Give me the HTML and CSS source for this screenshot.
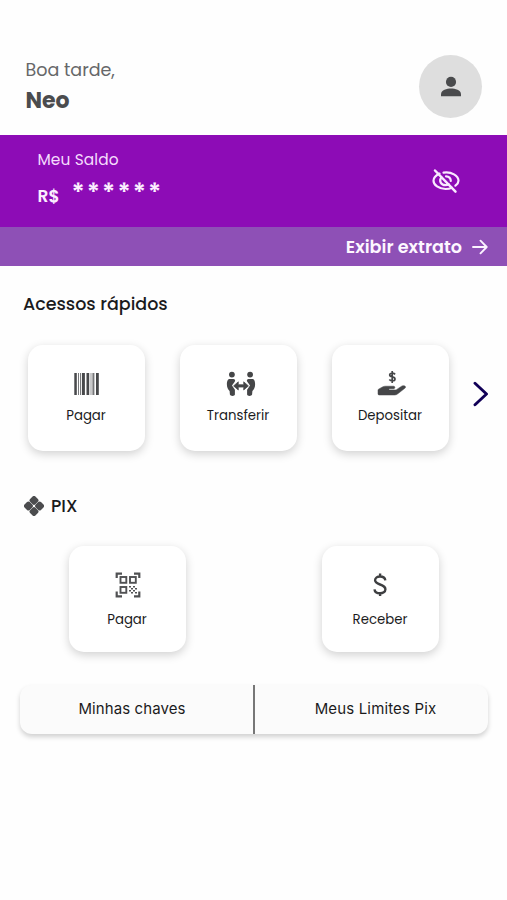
FILE: index.html
```html
<!DOCTYPE html>
<html lang="pt-BR">
<head>
<meta charset="utf-8">
<title>Conta</title>
<link rel="stylesheet" href="styles.css">
</head>
<body>
<header class="header">
  <div class="greeting"><span class="hello">Boa tarde,</span><strong class="name">Neo</strong></div>
  <div class="avatar">
    <svg width="32" height="32" viewBox="0 0 24 24" fill="#4a4b4d"><circle cx="12" cy="8.2" r="3.8"/><path d="M4.500 19v-1.500c0-3.200 4.500-4.300 7.500-4.300s7.500 1.100 7.500 4.300v1.500z"/></svg>
  </div>
</header>
<section class="balance">
  <div class="amount">
    <span class="label">Meu Saldo</span>
    <div class="value"><span class="currency">R$</span><span class="stars">******</span></div>
  </div>
  <svg class="eye" width="28" height="26" viewBox="0 0 28 26" fill="none" stroke="#f9eaff" stroke-width="2.200" stroke-linecap="round"><path d="M7.500 5.600C4 7.400 1.500 10.200 1.500 12.700C1.500 17 7 21 13.500 21C15.800 21 18 20.600 19.800 19.700M11.500 4.600C19.500 3.200 26.500 8 26.500 12.700C26.500 14.500 25.300 16.200 23.400 17.700M9.500 9.300C6.500 13 9 17.200 13.500 17.200C14.800 17.200 15.800 16.900 16.700 16.200M14 8.300C16.900 8.200 18.900 10.300 18.800 13"/><path d="M3 2.500L23.500 23.700" stroke-width="2.500"/></svg>
</section>
<div class="statement">
  <span class="statement-text">Exibir extrato</span>
  <svg width="16" height="16" viewBox="0 0 16 16" fill="none" stroke="#fbf3ff" stroke-width="1.900" stroke-linecap="round" stroke-linejoin="round"><path d="M1 8H14.500M8.500 1.700L14.700 8L8.500 14.300"/></svg>
</div>
<h2 class="title">Acessos rápidos</h2>
<div class="quick">
  <div class="card">
    <svg class="icon" width="28" height="28" viewBox="0 0 28 28" fill="#48494b"><path d="M1.300 3h2.500v22H1.300zM8.900 3h3v22h-3zM13.500 3h2.700v22h-2.700zM23 3h2.800v22H23z"/><path fill="#77787a" d="M5 3h1v22H5zM7 3h1v22H7zM17.600 3h.8v22h-.8zM19.400 3h2v22h-2z"/></svg>
    <span class="card-text">Pagar</span>
  </div>
  <div class="card">
    <svg class="icon transfer-icon" width="30" height="28" viewBox="0 0 30 28" fill="#454648"><circle cx="5.900" cy="4.600" r="2.900"/><circle cx="24.100" cy="4.600" r="2.900"/><path d="M3.700 9H7.300C9 9 9.700 10.500 8.700 11.700L6 15.600L8.900 19.800V24.500C8.900 26.400 4.200 26.400 3.900 24.500L3.600 21C2 19.500.9 17.200.9 14.500C.9 11.500 1.500 9 3.700 9zM26.300 9H22.700C21 9 20.300 10.500 21.300 11.700L24 15.600L21.100 19.800V24.500C21.100 26.400 25.800 26.400 26.100 24.500L26.400 21C28 19.500 29.100 17.200 29.100 14.500C29.100 11.500 28.500 9 26.300 9z"/><path d="M7.600 15.900L12.300 11.800V14.700H17.700V11.800L22.400 15.900L17.700 20V17.100H12.300V20z" stroke="#454648" stroke-width=".7" stroke-linejoin="round"/></svg>
    <span class="card-text">Transferir</span>
  </div>
  <div class="card">
    <svg class="icon deposit-icon" width="30" height="28" viewBox="0 0 30 28"><path d="M18.100 4.400C16.500 2.700 12.700 2.800 12.700 5C12.700 7.600 18 6.200 18 8.900C18 11.200 14 11.300 12.300 9.500M15.200 1V13" fill="none" stroke="#454648" stroke-width="1.700"/><path d="M2 18.900L5.500 16.900C6.300 16.400 7.500 16.200 8.500 16.200H16.500C18.300 16.200 18.300 18.700 16.500 18.700H12.500C11.700 18.700 11.700 19.900 12.500 19.900H19.100L24.600 16.200C27.500 14.800 29.800 16.700 27.800 18.300L20.800 23.800C19.900 24.600 18.700 25 17.500 25H2.300C1.500 25 1 24.600 1 23.900V20.100C1 19.500 1.400 19.200 2 18.900z" fill="#454648" stroke="#454648" stroke-width=".5"/></svg>
    <span class="card-text">Depositar</span>
  </div>
  <svg class="next" width="16" height="26" viewBox="0 0 16 26" fill="none" stroke="#110057" stroke-width="2.900" stroke-linecap="round" stroke-linejoin="round"><path d="M2 2.300L13.500 13L2 23.700"/></svg>
</div>
<div class="pix-title">
  <svg width="20" height="20" viewBox="0 0 20 20"><g transform="rotate(45 10 10)" fill="#4b4c4e"><rect x="2.300" y="2.300" width="7.500" height="7.500" rx="2"/><rect x="10.200" y="2.300" width="7.500" height="7.500" rx="2"/><rect x="2.300" y="10.200" width="7.500" height="7.500" rx="2"/><rect x="10.200" y="10.200" width="7.500" height="7.500" rx="2"/></g></svg>
  <h2 class="pix-name">PIX</h2>
</div>
<div class="pix">
  <div class="card">
    <svg class="icon" width="28" height="28" viewBox="0 0 28 28" fill="none" stroke="#505153" stroke-width="1.900"><path d="M2.700 7V2.700H8M20 2.700H25.300V7M2.700 20.500V25.300H8M20 25.300H25.300V20.500" stroke-width="2.200"/><rect x="6.500" y="6" width="5.800" height="5.800"/><rect x="16" y="6" width="5.800" height="5.800"/><rect x="6.500" y="16" width="5.800" height="5.800"/><path d="M15 15.800h2m2 0h2M17 17.800h2m2 0h2M15 19.800h2m2 0h2M17 21.800h2m2 0h2" stroke-width="1.500"/></svg>
    <span class="card-text">Pagar</span>
  </div>
  <div class="card">
    <svg class="icon dollar" width="28" height="28" viewBox="0 0 28 28" fill="none" stroke="#3e3f41" stroke-width="2.400"><path d="M19.300 9.300C18.800 4.200 9.100 4.100 9.100 9.300C9.100 14.500 19.400 12.500 19.400 18.300C19.400 23.700 9 23.500 8.500 18.300M14.100 2.500V6M14.100 21.500V25"/></svg>
    <span class="card-text">Receber</span>
  </div>
</div>
<div class="bar">
  <div class="option keys">Minhas chaves</div>
  <div class="option limits">Meus Limites Pix</div>
</div>
</body>
</html>
```

FILE: styles.css
```css
* { box-sizing: border-box; }
body { margin: 0; height: 900px; background: #fefefe; font-family: Poppins, Inter, sans-serif; color: #1b1b1d; overflow: hidden; }
svg { display: block; flex: none; }
h2 { margin: 0; font-weight: 500; }
.header { height: 135px; padding: 55px 25px 0 25.5px; display: flex; justify-content: space-between; }
.greeting { display: flex; flex-direction: column; white-space: nowrap; }
.hello { font-size: 17.5px; line-height: 31px; color: #666769; }
.name { font-size: 22px; line-height: 30px; color: #4b4c4e; }
.avatar { width: 63px; height: 63px; border-radius: 50%; background: #dedede; display: flex; align-items: center; justify-content: center; }
.balance { height: 92px; background: #8d0cb6; color: #fbefff; display: flex; justify-content: space-between; padding: 14px 47px 0 37.5px; }
.amount { display: flex; flex-direction: column; white-space: nowrap; }
.label { font-size: 15.4px; line-height: 21px; letter-spacing: .1px; color: #f5dcfd; }
.value { display: flex; height: 40px; }
.currency { width: 34px; padding-top: 16px; font-size: 17px; line-height: 20px; font-weight: 600; }
.stars { font-size: 25.5px; line-height: 45px; font-weight: 600; letter-spacing: 2.1px; }
.eye { margin-top: 19px; }
.statement { height: 39px; background: #8e50b6; color: #fdf7ff; display: flex; align-items: center; justify-content: flex-end; gap: 10px; padding-right: 19px; }
.statement-text { font-size: 17.6px; line-height: 26px; font-weight: 600; white-space: nowrap; }
.title { margin: 25px 0 0 23px; font-size: 17.500px; line-height: 26px; }
.quick { margin: 28px 0 0 28px; display: flex; gap: 35px; }
.card { width: 117px; height: 106px; border-radius: 15px; background: #fff; box-shadow: 0 3px 10px rgba(0,0,0,.18); display: flex; flex-direction: column; align-items: center; padding-top: 25px; white-space: nowrap; }
.icon { display: block; }
.transfer-icon { margin-left: 5px; }
.deposit-icon { margin-left: 2px; }
.dollar { margin-right: 1px; }
.card-text { margin: 8px 1px 0 0; font-size: 13.3px; line-height: 20px; }
.next { margin: 36px 0 0 -11px; }
.pix-title { margin: 42px 0 0 24px; height: 26px; display: flex; align-items: center; gap: 7px; }
.pix-name { font-size: 17.4px; line-height: 26px; }
.pix { margin: 27px 68px 0 69px; display: flex; justify-content: space-between; }
.pix .card-text { margin-top: 10.5px; }
.bar { margin: 33px 19px 0 20px; height: 49px; border-radius: 12px; background: #fbfbfb; box-shadow: 0 3px 5px rgba(0,0,0,.18); display: flex; font-family: Inter, sans-serif; font-size: 15px; }
.option { flex: 1; display: flex; align-items: center; justify-content: center; white-space: nowrap; padding-bottom: 2px; }
.keys { border-right: 2px solid #777; letter-spacing: .1px; padding-right: 9px; flex: 0 0 235px; }
.limits { letter-spacing: .15px; padding-left: 8px; }
```
